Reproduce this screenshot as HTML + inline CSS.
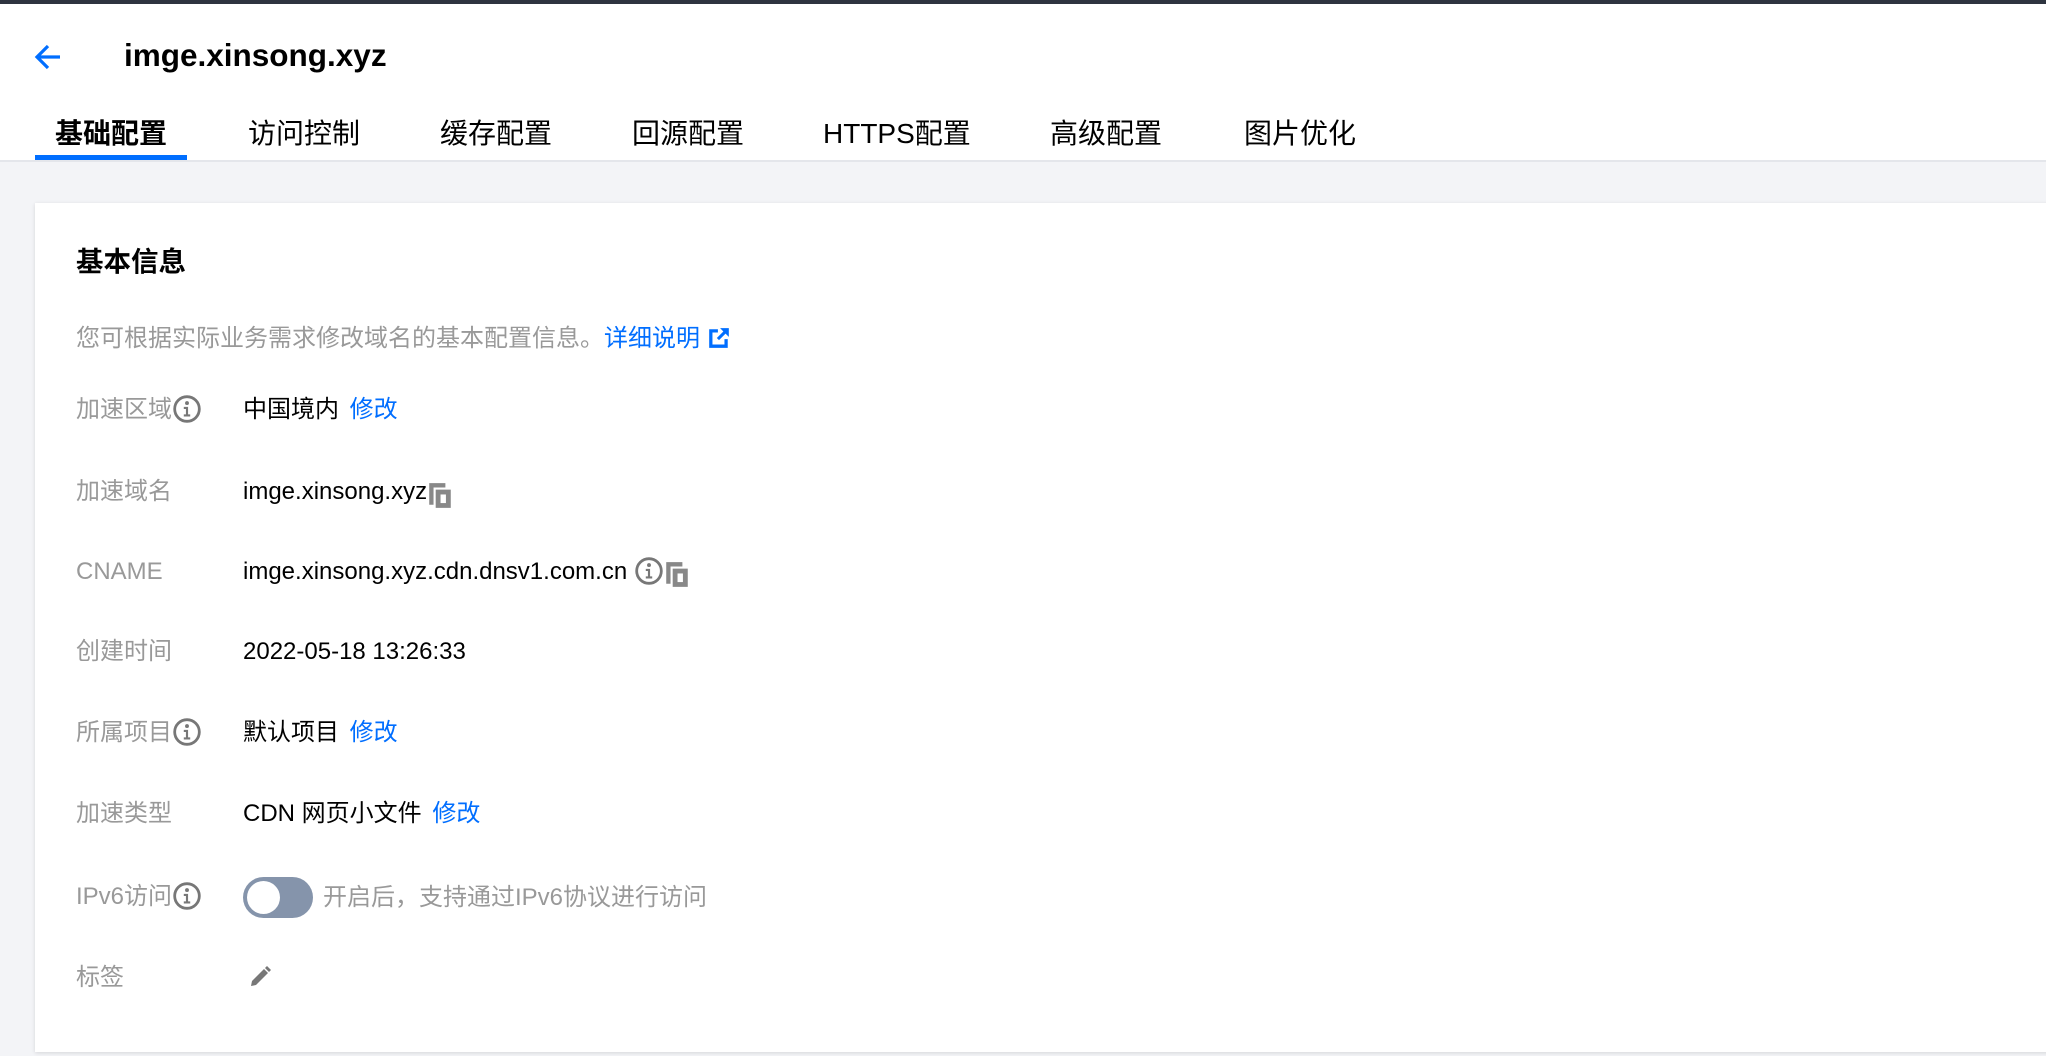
<!DOCTYPE html>
<html><head><meta charset="utf-8"><style>
*{margin:0;padding:0;box-sizing:border-box}
body{width:2046px;height:1056px;overflow:hidden;background:#f3f4f7;font-family:"Liberation Sans","Noto Sans CJK SC",sans-serif;position:relative}
.topbar{position:absolute;left:0;top:0;width:2046px;height:4px;background:#2e3440}
.header{position:absolute;left:0;top:4px;width:2046px;height:158px;background:#fff;border-bottom:2px solid #e4e6eb}
.title{position:absolute;left:124px;top:31px;font-size:31.5px;font-weight:bold;color:#000;line-height:40px}
.back{position:absolute;left:33px;top:38px}
.tab{position:absolute;top:111px;font-size:28px;color:#000;line-height:38px;white-space:nowrap}
.tab.on{font-weight:bold}
.ul{position:absolute;left:35px;top:155px;width:152px;height:5px;background:#006eff}
.card{position:absolute;left:35px;top:203px;width:2020px;height:849px;background:#fff;box-shadow:0 1px 4px rgba(0,0,0,.12)}
.h{position:absolute;left:76px;top:245px;font-size:27.5px;font-weight:bold;color:#000;line-height:34px}
.desc{position:absolute;left:76px;top:324px;font-size:24px;color:#999;line-height:30px;height:30px;white-space:nowrap}
.desc a{color:#006eff;text-decoration:none}
.lbl{position:absolute;left:76px;font-size:24px;color:#999;line-height:30px;height:30px;white-space:nowrap}
.val{position:absolute;left:243px;font-size:24px;color:#000;line-height:30px;height:30px;white-space:nowrap}
.val a{color:#006eff;margin-left:4px}
.ic{display:inline-block;vertical-align:middle;position:relative;top:-2px}
.tog{position:absolute;left:243px;top:877px;width:70px;height:41px;border-radius:21px;background:#8594ab}
.tog:after{content:"";position:absolute;left:4px;top:4px;width:33px;height:33px;border-radius:50%;background:#fff}
</style></head><body>
<div class="topbar"></div>
<div class="header">
<svg class="back" width="30" height="30" viewBox="0 0 30 30"><path d="M27 15H5M15 4L4 15l11 11" fill="none" stroke="#006eff" stroke-width="3.2"/></svg>
<div class="title">imge.xinsong.xyz</div>
<div class="tab on" style="left:55px">基础配置</div>
<div class="tab" style="left:248px">访问控制</div>
<div class="tab" style="left:440px">缓存配置</div>
<div class="tab" style="left:632px">回源配置</div>
<div class="tab" style="left:823px">HTTPS配置</div>
<div class="tab" style="left:1050px">高级配置</div>
<div class="tab" style="left:1244px">图片优化</div>
<div class="ul" style="top:151px"></div>
</div>
<div class="card"></div>
<div class="h">基本信息</div>
<div class="desc">您可根据实际业务需求修改域名的基本配置信息。<a>详细说明 <svg class="ic" width="24" height="24" viewBox="0 0 22 22"><path d="M2 3h8v3H5v11h11v-5h3v8H2z" fill="#006eff"/><path d="M12 2h8v8l-3-3-6 6-2-2 6-6z" fill="#006eff"/></svg></a></div>

<div class="lbl" style="top:395px">加速区域<svg class="ic" width="30" height="30" viewBox="0 0 28 28"><circle cx="14" cy="14" r="11.5" fill="none" stroke="#777" stroke-width="2.6"/><circle cx="14" cy="8.5" r="1.8" fill="#777"/><path d="M11 12h4v7h2v2h-6v-2h2v-5h-2z" fill="#777"/></svg></div>
<div class="val" style="top:395px">中国境内 <a>修改</a></div>

<div class="lbl" style="top:477px">加速域名</div>
<div class="val" style="top:477px">imge.xinsong.xyz<svg class="ic" width="26" height="28" viewBox="0 0 24 26" style="top:2px"><path d="M2 2h15v4H6v16H2z" fill="#888"/><path d="M8 8h14v17H8z" fill="#888"/><path d="M12.5 12.5h5v8h-5z" fill="#fff"/></svg></div>

<div class="lbl" style="top:557px">CNAME</div>
<div class="val" style="top:557px">imge.xinsong.xyz.cdn.dnsv1.com.cn <svg class="ic" width="30" height="30" viewBox="0 0 28 28"><circle cx="14" cy="14" r="11.5" fill="none" stroke="#777" stroke-width="2.6"/><circle cx="14" cy="8.5" r="1.8" fill="#777"/><path d="M11 12h4v7h2v2h-6v-2h2v-5h-2z" fill="#777"/></svg><svg class="ic" width="26" height="28" viewBox="0 0 24 26" style="top:1px"><path d="M2 2h15v4H6v16H2z" fill="#888"/><path d="M8 8h14v17H8z" fill="#888"/><path d="M12.5 12.5h5v8h-5z" fill="#fff"/></svg></div>

<div class="lbl" style="top:637px">创建时间</div>
<div class="val" style="top:637px">2022-05-18 13:26:33</div>

<div class="lbl" style="top:718px">所属项目<svg class="ic" width="30" height="30" viewBox="0 0 28 28"><circle cx="14" cy="14" r="11.5" fill="none" stroke="#777" stroke-width="2.6"/><circle cx="14" cy="8.5" r="1.8" fill="#777"/><path d="M11 12h4v7h2v2h-6v-2h2v-5h-2z" fill="#777"/></svg></div>
<div class="val" style="top:718px">默认项目 <a>修改</a></div>

<div class="lbl" style="top:799px">加速类型</div>
<div class="val" style="top:799px">CDN 网页小文件 <a>修改</a></div>

<div class="lbl" style="top:882px">IPv6访问<svg class="ic" width="30" height="30" viewBox="0 0 28 28"><circle cx="14" cy="14" r="11.5" fill="none" stroke="#777" stroke-width="2.6"/><circle cx="14" cy="8.5" r="1.8" fill="#777"/><path d="M11 12h4v7h2v2h-6v-2h2v-5h-2z" fill="#777"/></svg></div>
<div class="tog"></div>
<div class="val" style="top:883px;left:323px;color:#999">开启后，支持通过IPv6协议进行访问</div>

<div class="lbl" style="top:963px">标签</div>
<svg style="position:absolute;left:247px;top:964px" width="26" height="26" viewBox="0 0 26 26"><path d="M4 22l1-5L17 5l4 4L9 21z" fill="#777"/><path d="M18 4l2-2 4 4-2 2z" fill="#777"/></svg>
</body></html>
